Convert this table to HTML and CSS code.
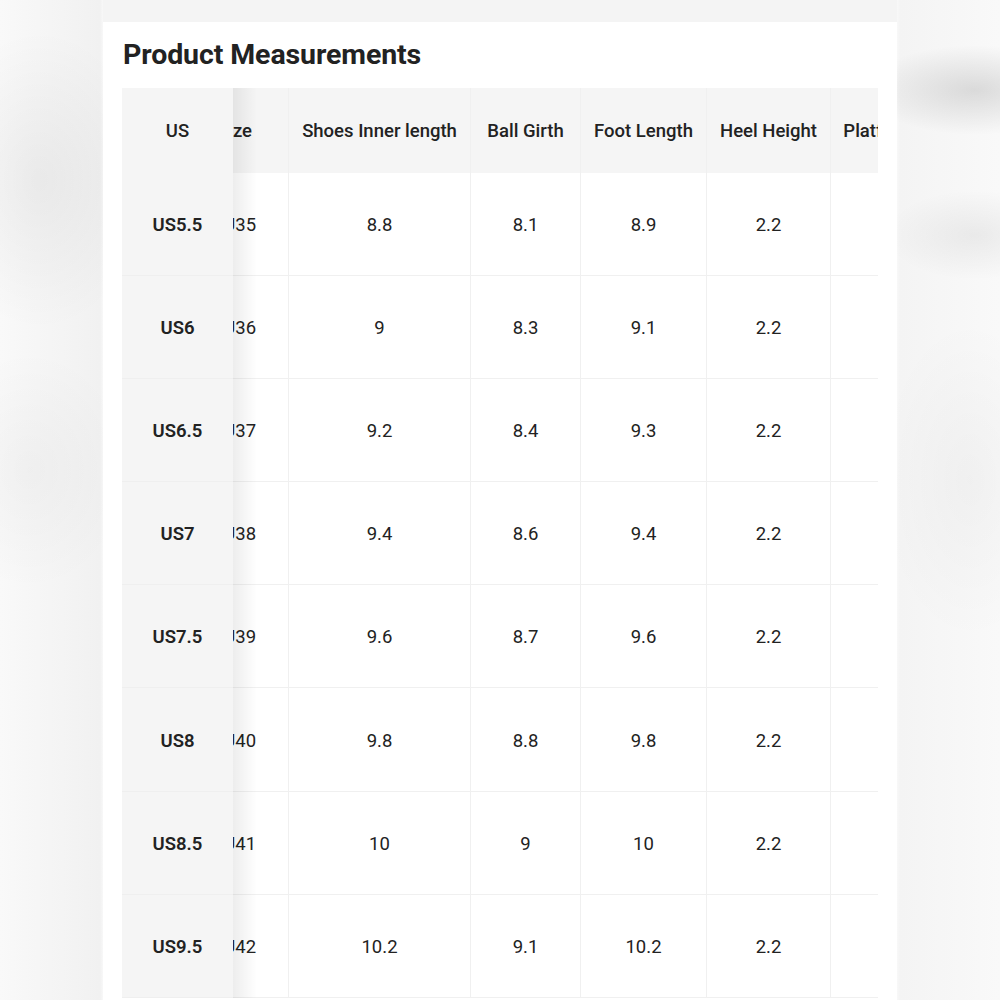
FILE: index.html
```html
<!DOCTYPE html>
<html lang="en">
<head>
<meta charset="utf-8">
<title>Product Measurements</title>
<link rel="stylesheet" href="styles.css">
</head>
<body>
<div class="backdrop">
  <div class="page">
    <section class="card">
      <h2 class="title">Product Measurements</h2>
      <div class="table">
        <div class="sticky-col">
          <div class="cell head">US</div>
          <div class="cell key">US5.5</div>
          <div class="cell key">US6</div>
          <div class="cell key">US6.5</div>
          <div class="cell key">US7</div>
          <div class="cell key">US7.5</div>
          <div class="cell key">US8</div>
          <div class="cell key">US8.5</div>
          <div class="cell key">US9.5</div>
        </div>
        <div class="scroll">
          <div class="grid">
            <div class="cell head">Size</div>
            <div class="cell head">Shoes Inner length</div>
            <div class="cell head">Ball Girth</div>
            <div class="cell head">Foot Length</div>
            <div class="cell head">Heel Height</div>
            <div class="cell head">Platform</div>

            <div class="cell">EU35</div><div class="cell">8.8</div><div class="cell">8.1</div><div class="cell">8.9</div><div class="cell">2.2</div><div class="cell"></div>
            <div class="cell">EU36</div><div class="cell">9</div><div class="cell">8.3</div><div class="cell">9.1</div><div class="cell">2.2</div><div class="cell"></div>
            <div class="cell">EU37</div><div class="cell">9.2</div><div class="cell">8.4</div><div class="cell">9.3</div><div class="cell">2.2</div><div class="cell"></div>
            <div class="cell">EU38</div><div class="cell">9.4</div><div class="cell">8.6</div><div class="cell">9.4</div><div class="cell">2.2</div><div class="cell"></div>
            <div class="cell">EU39</div><div class="cell">9.6</div><div class="cell">8.7</div><div class="cell">9.6</div><div class="cell">2.2</div><div class="cell"></div>
            <div class="cell">EU40</div><div class="cell">9.8</div><div class="cell">8.8</div><div class="cell">9.8</div><div class="cell">2.2</div><div class="cell"></div>
            <div class="cell">EU41</div><div class="cell">10</div><div class="cell">9</div><div class="cell">10</div><div class="cell">2.2</div><div class="cell"></div>
            <div class="cell">EU42</div><div class="cell">10.2</div><div class="cell">9.1</div><div class="cell">10.2</div><div class="cell">2.2</div><div class="cell"></div>
          </div>
        </div>
      </div>
    </section>
  </div>
</div>
</body>
</html>
```

FILE: styles.css
```css
* { box-sizing: border-box; }
html, body { margin: 0; padding: 0; }
body {
  font-family: Roboto, "Noto Sans", "Liberation Sans", sans-serif;
  color: #222;
  height: 1000px;
  overflow: hidden;
}
.backdrop {
  height: 1000px;
  background:
    radial-gradient(ellipse 110px 45px at 975px 90px, rgba(0,0,0,0.12), transparent),
    radial-gradient(ellipse 90px 45px at 975px 235px, rgba(0,0,0,0.06), transparent),
    radial-gradient(ellipse 110px 150px at 40px 180px, rgba(0,0,0,0.05), transparent),
    radial-gradient(ellipse 100px 120px at 30px 470px, rgba(0,0,0,0.03), transparent),
    radial-gradient(ellipse 90px 160px at 970px 480px, rgba(0,0,0,0.03), transparent),
    linear-gradient(to right, #f9f9f9 0, #f1f1f1 100px, #f8f8f8 103px, #f8f8f8 897px, #f4f4f4 900px, #f9f9f9 1000px);
}
.page {
  width: 794px;
  margin: 0 auto;
  height: 1000px;
  background: #f4f4f4;
  padding-top: 22px;
}
.card {
  background: #fff;
  height: 978px;
  padding: 0 19px;
  overflow: hidden;
}
.title {
  margin: 0;
  height: 66px;
  padding-top: 16px;
  padding-left: 1px;
  font-size: 28.5px;
  line-height: 34px;
  font-weight: 700;
  letter-spacing: -0.1px;
  color: #222;
}
.table {
  display: flex;
  width: 756px;
}
.sticky-col {
  width: 111px;
  flex: none;
  background: #f5f5f5;
  position: relative;
  z-index: 1;
}
.sticky-col::after {
  content: "";
  position: absolute;
  top: 0;
  bottom: 0;
  right: -24px;
  width: 24px;
  background: linear-gradient(to right, rgba(0,0,0,0.07), rgba(0,0,0,0));
  pointer-events: none;
}
.scroll {
  flex: 1;
  overflow: hidden;
}
.grid {
  margin-left: -52px;
  display: grid;
  grid-template-columns: 108px 182px 110px 126px 124px 98px;
  width: 748px;
}
.cell {
  height: 103.1px;
  padding-top: 2px;
  display: flex;
  align-items: center;
  justify-content: center;
  font-size: 18.5px;
  font-weight: 400;
  border-right: 1px solid #f0f0f0;
  border-bottom: 1px solid #f0f0f0;
  white-space: nowrap;
}
.cell.head {
  height: 85px;
  padding-top: 0;
  background: #f5f5f5;
  font-weight: 500;
  border-bottom: none;
}
.sticky-col .cell {
  border-right: none;
  border-bottom: 1px solid #efefef;
}
.sticky-col .cell.head { border-bottom: none; }
.cell.key { font-weight: 600; }
```
